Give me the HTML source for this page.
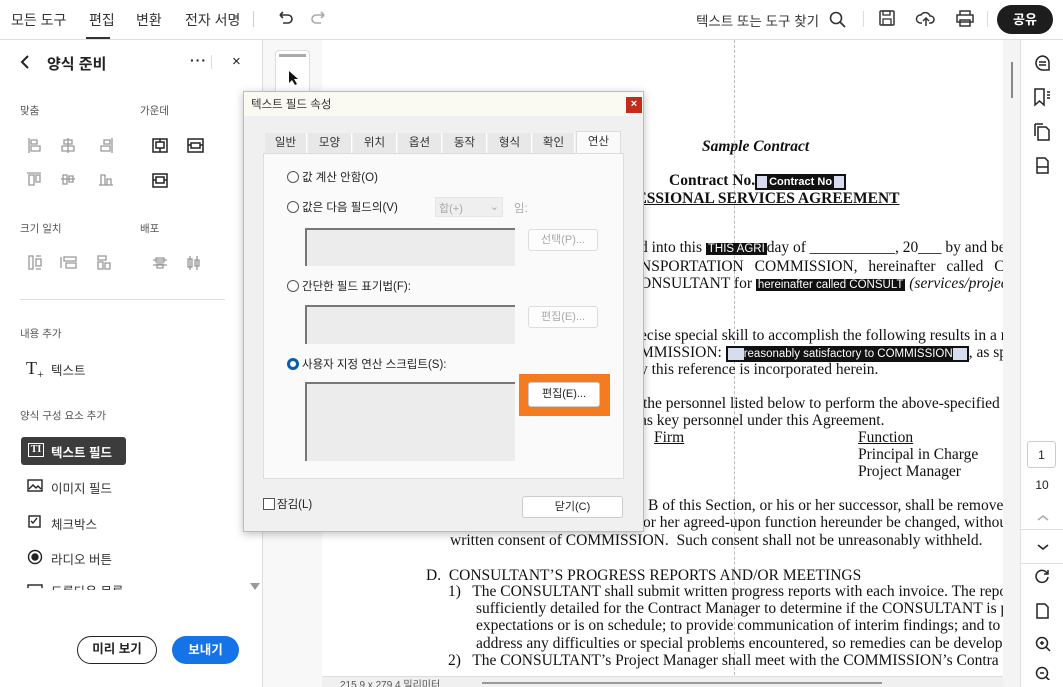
<!DOCTYPE html>
<html><head><meta charset="utf-8">
<style>
*{margin:0;padding:0;box-sizing:border-box}
body{width:1063px;height:687px;overflow:hidden;background:#fff;font-family:"Liberation Sans","Noto Sans CJK KR",sans-serif;color:#222;position:relative}
.a{position:absolute}
.k{font-family:"Liberation Sans","Noto Sans CJK KR",sans-serif}
.doc{font-family:"Liberation Serif",serif;font-size:15.5px;color:#111;white-space:nowrap;position:absolute}
.fld{background:#111;color:#fff;font-family:"Liberation Sans",sans-serif;font-size:11px;padding:0 2px}
.ic{stroke:#999;fill:none;stroke-width:1.3}
.tab{position:absolute;top:133px;height:20px;font-size:11.5px;color:#333;text-align:center;line-height:20px;background:#e8e8e8;border-right:1px solid #fff}
.btn{position:absolute;background:#fdfdfd;border:1px solid #ddd;border-radius:3px;font-size:11px;color:#aaa;text-align:center}
.box{position:absolute;background:#ececec;border-top:2px solid #777;border-left:2px solid #777}
.rd{display:inline-block;width:12px;height:12px;border:1px solid #555;border-radius:50%;vertical-align:-2px;margin-right:3px;background:#fff}
.lbl{position:absolute;font-size:11.5px;color:#222}
</style></head><body>
<!-- top bar -->
<div class="a" style="left:0;top:0;width:1063px;height:40px;border-bottom:1px solid #ddd"></div>
<div class="a" style="left:11px;top:10px;font-size:14px;color:#333">모든 도구</div>
<div class="a" style="left:89px;top:10px;font-size:14px;color:#333">편집</div>
<div class="a" style="left:86px;top:37px;width:24px;height:2px;background:#333"></div>
<div class="a" style="left:136px;top:10px;font-size:14px;color:#333">변환</div>
<div class="a" style="left:185px;top:10px;font-size:14px;color:#333">전자 서명</div>
<div class="a" style="left:253px;top:11px;width:1px;height:16px;background:#ccc"></div>
<svg class="a" style="left:274px;top:10px" width="60" height="18"><path d="M6 5h8a4 4 0 0 1 0 8H9M6 5l3-3M6 5l3 3" stroke="#333" stroke-width="1.6" fill="none"/><path d="M50 5h-8a4 4 0 0 0 0 8h5M50 5l-3-3M50 5l-3 3" stroke="#aaa" stroke-width="1.6" fill="none"/></svg>
<div class="a" style="left:696px;top:10px;font-size:13.5px;color:#333">텍스트 또는 도구 찾기</div>
<svg class="a" style="left:828px;top:10px" width="20" height="20"><circle cx="8" cy="8" r="5.5" stroke="#333" stroke-width="1.6" fill="none"/><path d="M12 12l5 5" stroke="#333" stroke-width="1.8"/></svg>
<div class="a" style="left:863px;top:11px;width:1px;height:16px;background:#ddd"></div>
<svg class="a" style="left:878px;top:9px" width="100" height="20"><rect x="2" y="2" width="14" height="14" rx="1" stroke="#333" stroke-width="1.5" fill="none"/><rect x="5" y="2" width="7" height="4" stroke="#333" stroke-width="1.3" fill="none"/><rect x="5" y="10" width="8" height="6" stroke="#333" stroke-width="1.3" fill="none"/><path d="M44 14h-2a4 4 0 0 1 1-8 5 5 0 0 1 9 1 3.5 3.5 0 0 1 1 7h-2M48 17v-8M45 12l3-3 3 3" stroke="#333" stroke-width="1.5" fill="none"/><path d="M82 6V2h10v4M79 6h16v7H79zM82 11h10v6H82z" stroke="#333" stroke-width="1.5" fill="#fff"/></svg>
<div class="a" style="left:987px;top:11px;width:1px;height:16px;background:#ddd"></div>
<div class="a" style="left:997px;top:5px;width:56px;height:29px;background:#1d1d1d;border-radius:15px;color:#fff;font-size:13px;font-weight:bold;text-align:center;line-height:29px">공유</div>

<!-- left panel -->
<div class="a" style="left:262px;top:40px;width:1px;height:647px;background:#ddd"></div>
<svg class="a" style="left:18px;top:54px" width="14" height="16"><path d="M10 2L4 8l6 6" stroke="#222" stroke-width="2" fill="none"/></svg>
<div class="a" style="left:47px;top:53px;font-size:15px;font-weight:bold;color:#222">양식 준비</div>
<div class="a" style="left:190px;top:52px;font-size:14px;font-weight:bold;letter-spacing:1px">···</div>
<div class="a" style="left:211px;top:55px;width:1px;height:14px;background:#ddd"></div>
<div class="a" style="left:232px;top:53px;font-size:15px">×</div>
<div class="a" style="left:20px;top:103px;font-size:10.5px;color:#555">맞춤</div>
<div class="a" style="left:140px;top:103px;font-size:10.5px;color:#555">가운데</div>
<svg class="a" style="left:25px;top:135px" width="200" height="60">
<g class="ic"><path d="M4 3v15M6 5h6v4H6zM6 11h9v5H6z"/><path d="M43 3v15M39 5h8v4h-8zM37 11h12v5H37z"/><path d="M87 3v15M79 5h6v4h-6zM76 11h9v5h-9z"/>
<path d="M2 38h14M4 40h5v10H4zM11 40h4v7h-4z"/><path d="M36 44h14M38 40h4v9h-4zM44 41h4v6h-4z"/><path d="M74 50h14M76 40h4v10h-4zM82 44h4v6h-4z"/></g>
<g stroke="#222" stroke-width="1.5" fill="none"><rect x="128" y="4" width="14" height="13"/><rect x="131" y="7" width="8" height="6"/><path d="M135 4v3M135 13v4"/><rect x="163" y="4" width="15" height="13"/><rect x="166" y="8" width="9" height="5"/><path d="M163 10h3M175 10h3"/><rect x="128" y="39" width="14" height="13"/><rect x="131" y="42" width="8" height="6"/><path d="M128 45h3M139 45h3"/></g></svg>
<div class="a" style="left:20px;top:221px;font-size:10.5px;color:#555">크기 일치</div>
<div class="a" style="left:140px;top:221px;font-size:10.5px;color:#555">배포</div>
<svg class="a" style="left:25px;top:253px" width="200" height="25"><g class="ic"><path d="M4 3h4v13H4zM11 6h5v7h-5zM11 3h5M11 16h5"/><path d="M39 4h12v4H39zM41 10h10v5H41zM36 4v11"/><path d="M73 3h8v4h-8zM73 9h5v7h-5zM80 10h5v6h-5z"/><path d="M128 7h14M128 12h14M131 5h8v4h-8zM132 11h6v4h-6z"/><path d="M165 3v14M172 3v14M163 6h4v8h-4zM170 7h4v6h-4z"/></g></svg>
<div class="a" style="left:20px;top:299px;width:205px;height:1px;background:#ddd"></div>
<div class="a" style="left:20px;top:326px;font-size:10.5px;color:#555">내용 추가</div>
<div class="a" style="left:26px;top:358px;font-family:'Liberation Serif',serif;font-size:18px">T<span style="font-size:12px;vertical-align:-4px">+</span></div>
<div class="a" style="left:51px;top:360px;font-size:12.5px;color:#333">텍스트</div>
<div class="a" style="left:20px;top:408px;font-size:10.5px;color:#555">양식 구성 요소 추가</div>
<div class="a" style="left:21px;top:437px;width:105px;height:28px;background:#3c3c3c;border-radius:3px"></div>
<div class="a" style="left:28px;top:443px;width:16px;height:14px;border:1.5px solid #fff;color:#fff;font-family:'Liberation Serif',serif;font-size:10px;font-weight:bold;text-align:center;line-height:11px">TI</div>
<div class="a" style="left:51px;top:442px;font-size:12.5px;color:#fff;font-weight:bold">텍스트 필드</div>
<svg class="a" style="left:27px;top:478px" width="20" height="110"><g stroke="#222" stroke-width="1.4" fill="none"><rect x="1" y="2" width="14" height="11"/><path d="M2 11l4-4 3 3 2-2 3 3"/><rect x="2" y="38" width="11" height="11"/><path d="M4 43l2 2 4-5"/><circle cx="8" cy="79" r="6.5"/><circle cx="8" cy="79" r="3" fill="#222"/><rect x="1" y="107" width="14" height="6"/></g></svg>
<div class="a" style="left:51px;top:478px;font-size:12.5px;color:#333">이미지 필드</div>
<div class="a" style="left:51px;top:514px;font-size:12.5px;color:#333">체크박스</div>
<div class="a" style="left:51px;top:549px;font-size:12.5px;color:#333">라디오 버튼</div>
<div class="a" style="left:51px;top:582px;width:80px;height:8px;overflow:hidden"><div style="font-size:12.5px;color:#333;margin-top:-1px">드롭다운 목록</div></div>
<div class="a" style="left:250px;top:583px;width:0;height:0;border-left:5px solid transparent;border-right:5px solid transparent;border-top:7px solid #999"></div>
<div class="a" style="left:77px;top:636px;width:80px;height:28px;border:1.5px solid #222;border-radius:14px;font-size:12.5px;font-weight:bold;text-align:center;line-height:25px">미리 보기</div>
<div class="a" style="left:172px;top:636px;width:67px;height:28px;background:#1473e6;border-radius:14px;font-size:12.5px;font-weight:bold;color:#fff;text-align:center;line-height:28px">보내기</div>

<!-- tool strip -->
<div class="a" style="left:263px;top:40px;width:59px;height:647px;background:#f8f8f8"></div>
<div class="a" style="left:275px;top:50px;width:35px;height:50px;background:#fff;border:1px solid #ddd;border-radius:4px"></div>
<div class="a" style="left:279px;top:54px;width:27px;height:3px;background:#aaa"></div>
<svg class="a" style="left:287px;top:70px" width="12" height="16"><path d="M2 1v12l3-3 3 5 2-1-3-5h4z" fill="#111"/></svg>

<!-- document -->
<div class="a" style="left:322px;top:40px;width:681px;height:647px;overflow:hidden">
<div class="a" style="left:412px;top:0;height:640px;border-left:1px dashed #bbb"></div>
<div class="doc" style="left:380px;top:98px;font-style:italic;font-weight:bold">Sample Contract</div>
<div class="doc" style="left:347px;top:132px;font-weight:bold">Contract No.<span class="fld" style="border:2px solid #111;background:#d8dcf0;color:#fff;padding:0"><span style="display:inline-block;width:10px"></span><span style="background:#111;padding:0 2px">Contract No</span><span style="display:inline-block;width:10px"></span></span></div>
<div class="doc" style="left:305px;top:150px;font-weight:bold;text-decoration:underline">FESSIONAL SERVICES AGREEMENT</div>
<div class="doc" style="left:318px;top:199px">d into this <span class="fld" style="font-size:11.5px">THIS AGRI</span>day of ___________, 20___ by and betw</div>
<div class="doc" style="left:318px;top:218px;word-spacing:7px">NSPORTATION COMMISSION, hereinafter called COMM</div>
<div class="doc" style="left:318px;top:235px">ONSULTANT for <span class="fld" style="font-size:11.5px">hereinafter called CONSULT</span> <i>(services/project</i></div>
<div class="doc" style="left:318px;top:287px">ecise special skill to accomplish the following results in a m</div>
<div class="doc" style="left:318px;top:304px">MMISSION: <span class="fld" style="border:2px solid #111;background:#d8dcf0;padding:0"><span style="display:inline-block;width:16px"></span><span style="background:#111;font-size:11.5px">reasonably satisfactory to COMMISSION</span><span style="display:inline-block;width:14px"></span></span>, as speci</div>
<div class="doc" style="left:318px;top:321px">y this reference is incorporated herein.</div>
<div class="doc" style="left:321px;top:355px">the personnel listed below to perform the above-specified</div>
<div class="doc" style="left:318px;top:372px">as key personnel under this Agreement.</div>
<div class="doc" style="left:332px;top:389px;text-decoration:underline">Firm</div>
<div class="doc" style="left:536px;top:389px;text-decoration:underline">Function</div>
<div class="doc" style="left:536px;top:406px">Principal in Charge</div>
<div class="doc" style="left:536px;top:423px">Project Manager</div>
<div class="doc" style="left:326px;top:457px">B of this Section, or his or her successor, shall be removed</div>
<div class="doc" style="left:321px;top:474px">or her agreed-upon function hereunder be changed, without</div>
<div class="doc" style="left:128px;top:492px">written consent of COMMISSION.&nbsp; Such consent shall not be unreasonably withheld.</div>
<div class="doc" style="left:104px;top:527px">D.&nbsp; CONSULTANT’S PROGRESS REPORTS AND/OR MEETINGS</div>
<div class="doc" style="left:126px;top:543px">1)&nbsp;&nbsp; The CONSULTANT shall submit written progress reports with each invoice. The repo</div>
<div class="doc" style="left:154px;top:560px">sufficiently detailed for the Contract Manager to determine if the CONSULTANT is pe</div>
<div class="doc" style="left:154px;top:577px">expectations or is on schedule; to provide communication of interim findings; and to s</div>
<div class="doc" style="left:154px;top:595px">address any difficulties or special problems encountered, so remedies can be develope</div>
<div class="doc" style="left:126px;top:612px">2)&nbsp;&nbsp; The CONSULTANT’s Project Manager shall meet with the COMMISSION’s Contra</div>
<div class="a" style="left:0;top:636px;width:681px;height:11px;background:#f0f0f0;border-top:1px solid #ddd"></div>
<div class="a" style="left:18px;top:636px;font-size:10px;color:#555">215.9 x 279.4 밀리미터</div>
<div class="a" style="left:160px;top:642px;width:400px;height:2px;background:#999"></div>
</div>
<!-- scrollbar -->
<div class="a" style="left:1003px;top:40px;width:17px;height:647px;background:#f4f4f4"></div>
<div class="a" style="left:1011px;top:62px;width:2px;height:36px;background:#888"></div>
<div class="a" style="left:1020px;top:40px;width:1px;height:647px;background:#e0e0e0"></div>
<!-- right rail -->
<svg class="a" style="left:1030px;top:52px" width="26" height="130"><g stroke="#222" stroke-width="1.5" fill="none"><path d="M13 4a7 7 0 1 0 0 14h6v-7a7 7 0 0 0-6-7z"/><path d="M9 10h7M9 13h7"/><path d="M5 37h9v16l-4.5-4-4.5 4zM17 40h3M17 43h3M17 46h3"/><path d="M8 75h8l3 3v10H8zM5 72h8M5 72v12"/><path d="M7 106h8l3 3v12H7zM7 115h11"/></g></svg>
<div class="a" style="left:1027px;top:441px;width:29px;height:27px;border:1px solid #ccc;border-radius:3px;font-size:12px;text-align:center;line-height:26px">1</div>
<div class="a" style="left:1030px;top:478px;font-size:12px;width:24px;text-align:center">10</div>
<svg class="a" style="left:1034px;top:510px" width="18" height="170"><g stroke="#222" stroke-width="1.5" fill="none"><path d="M4 10l5-4 5 4" stroke="#aaa"/><path d="M4 35l5 4 5-4"/><path d="M14 67a6 6 0 1 1-1-4M14 60v4h-4"/><path d="M3 94h8l3 3v11H3z"/><circle cx="8" cy="133" r="5.5"/><path d="M12 137l4 4M6 133h4M8 131v4"/><circle cx="8" cy="163" r="5.5"/><path d="M12 167l4 4M6 163h4"/></g></svg>
<div class="a" style="left:1021px;top:529px;width:42px;height:1px;background:#ddd"></div>
<div class="a" style="left:1021px;top:563px;width:42px;height:1px;background:#ddd"></div>

<!-- dialog -->
<div class="a" style="left:243px;top:91px;width:401px;height:441px;background:#f0f0f0;border:1px solid #bbb;box-shadow:0 2px 8px rgba(0,0,0,.25)"></div>
<div class="a" style="left:244px;top:92px;width:399px;height:24px;background:#fafaf2"></div>
<div class="a" style="left:251px;top:96px;font-size:11.5px;color:#333">텍스트 필드 속성</div>
<div class="a" style="left:626px;top:97px;width:16px;height:16px;background:#c42b1c;color:#fff;font-size:11px;text-align:center;line-height:15px;font-weight:bold">×</div>
<div class="tab" style="left:265px;width:42px">일반</div>
<div class="tab" style="left:308px;width:44px">모양</div>
<div class="tab" style="left:353px;width:44px">위치</div>
<div class="tab" style="left:398px;width:44px">옵션</div>
<div class="tab" style="left:443px;width:44px">동작</div>
<div class="tab" style="left:488px;width:44px">형식</div>
<div class="tab" style="left:533px;width:42px">확인</div>
<div class="tab" style="left:576px;top:131px;height:23px;width:45px;background:#fafafa;border:1px solid #ddd;border-bottom:none">연산</div>
<div class="a" style="left:263px;top:153px;width:361px;height:326px;background:#fafafa;border:1px solid #ddd"></div>
<div class="lbl" style="left:287px;top:169px"><span class="rd"></span>값 계산 안함(O)</div>
<div class="lbl" style="left:287px;top:199px"><span class="rd"></span>값은 다음 필드의(V)</div>
<div class="a" style="left:435px;top:197px;width:68px;height:20px;background:#efefef;border:1px solid #e6e6e6;font-size:11px;color:#aaa;padding:2px 3px">합(+)<span style="float:right">⌄</span></div>
<div class="lbl" style="left:514px;top:200px;color:#aaa">임:</div>
<div class="box" style="left:305px;top:228px;width:210px;height:38px"></div>
<div class="btn" style="left:528px;top:229px;width:70px;height:22px;line-height:20px">선택(P)...</div>
<div class="lbl" style="left:287px;top:278px"><span class="rd"></span>간단한 필드 표기법(F):</div>
<div class="box" style="left:305px;top:305px;width:210px;height:39px"></div>
<div class="btn" style="left:528px;top:306px;width:70px;height:22px;line-height:20px">편집(E)...</div>
<div class="lbl" style="left:287px;top:356px"><span class="rd" style="border:3.5px solid #0b5cad"></span>사용자 지정 연산 스크립트(S):</div>
<div class="box" style="left:305px;top:382px;width:210px;height:79px"></div>
<div class="a" style="left:519px;top:374px;width:91px;height:42px;background:#f47b20"></div>
<div class="btn" style="left:528px;top:382px;width:72px;height:25px;line-height:23px;color:#222;background:#fff;border-color:#ccc">편집(E)...</div>
<div class="lbl" style="left:263px;top:496px"><span style="display:inline-block;width:12px;height:12px;border:1px solid #555;background:#fff;vertical-align:-2px;margin-right:2px"></span>잠김(L)</div>
<div class="btn" style="left:522px;top:496px;width:101px;height:22px;line-height:20px;color:#222;background:#fff;border-color:#ccc">닫기(C)</div>
</body></html>
